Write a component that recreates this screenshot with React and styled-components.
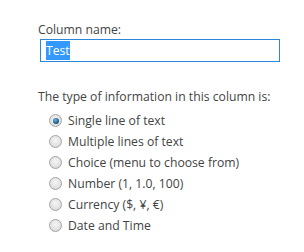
import styled, { createGlobalStyle } from "styled-components";

const Global = createGlobalStyle`
  body {
    margin: 0;
    background: #ffffff;
    font-family: "Open Sans", "Noto Sans", sans-serif;
    color: #444444;
  }
`;

const Page = styled.div`
  padding: 21px 0 0 38px;
  width: 304px;
  height: 252px;
  box-sizing: border-box;
`;

const Label = styled.div`
  font-size: 12.2px;
  line-height: 17px;
`;

const NameBox = styled.div`
  margin: 1px 0 0 2px;
  width: 240px;
  height: 23px;
  box-sizing: border-box;
  border: 1px solid #2b88d8;
  padding: 2px 0 0 5px;
  font-size: 12.2px;
  line-height: 17px;
`;

const Selected = styled.span`
  background: #3399ff;
  color: #ffffff;
  padding: 1px 0;
`;

const Question = styled(Label)`
  margin-top: 26px;
`;

const Options = styled.div`
  display: flex;
  flex-direction: column;
  gap: 4px;
  margin: 7px 0 0 11px;
`;

const Option = styled.label`
  display: flex;
  align-items: center;
  gap: 6px;
  font-size: 12.2px;
  line-height: 17px;
`;

const Radio = styled.span`
  width: 11px;
  height: 11px;
  border-radius: 50%;
  border: 1px solid #a4a4a4;
  background: radial-gradient(circle at 50% 40%, #f6f6f6 0%, #dedede 70%, #c8c8c8 100%);
  display: flex;
  align-items: center;
  justify-content: center;

  &::after {
    content: "";
    width: 6px;
    height: 6px;
    border-radius: 50%;
    display: ${(p) => (p.$on ? "block" : "none")};
    background: radial-gradient(circle at 40% 35%, #6fb3e0 0%, #1f5f8e 60%, #0d3a5c 100%);
  }
`;

const types = [
  "Single line of text",
  "Multiple lines of text",
  "Choice (menu to choose from)",
  "Number (1, 1.0, 100)",
  "Currency ($, ¥, €)",
  "Date and Time",
];

export default function App() {
  return (
    <Page>
      <Global />
      <Label>Column name:</Label>
      <NameBox>
        <Selected>Test</Selected>
      </NameBox>
      <Question>The type of information in this column is:</Question>
      <Options>
        {types.map((t, i) => (
          <Option key={t}>
            <Radio $on={i === 0} />
            {t}
          </Option>
        ))}
      </Options>
    </Page>
  );
}
